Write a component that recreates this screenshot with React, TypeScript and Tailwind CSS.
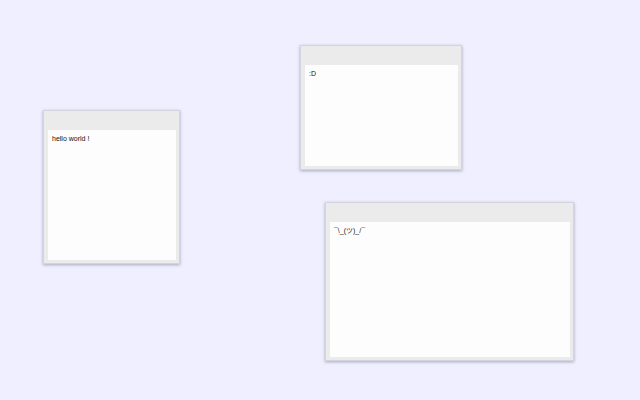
import React from "react";

type Win = { left: number; top: number; width: number; height: number; text: string };

const wins: Win[] = [
  { left: 43, top: 110, width: 137, height: 154, text: "hello world !" },
  { left: 300, top: 45, width: 162, height: 125, text: ":D" },
  { left: 325, top: 202, width: 249, height: 159, text: "¯\\_(ツ)_/¯" },
];

export default function App() {
  return (
    <div
      className="relative w-[640px] h-[400px] overflow-hidden bg-[#f0efff] antialiased"
      style={{ fontFamily: '"Liberation Sans", Arial, "Noto Sans CJK JP", sans-serif' }}
    >
      {wins.map((w, i) => (
        <div
          key={i}
          className="absolute flex flex-col bg-[#ebebeb] border border-[#d4d3de] shadow-[0_1px_3px_rgba(60,60,90,0.4)]"
          style={{ left: w.left, top: w.top, width: w.width, height: w.height }}
        >
          <div className="h-[19px] shrink-0" />
          <div className="flex-1 ml-[4px] mr-[3px] mb-[3px] bg-[#fdfdfd] px-[4px] pt-[4px] text-[7px] leading-[10px] text-[#111]">
            {w.text}
          </div>
        </div>
      ))}
    </div>
  );
}
